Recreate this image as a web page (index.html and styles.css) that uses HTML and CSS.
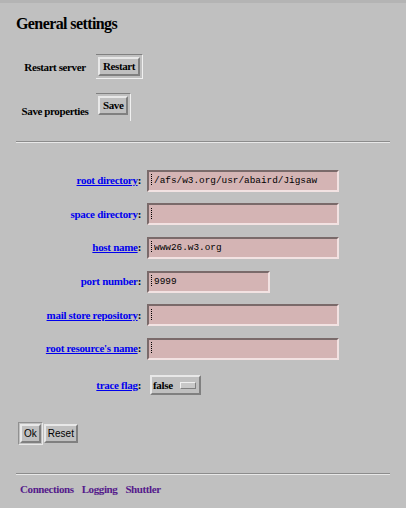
FILE: index.html
```html
<!DOCTYPE html>
<html>
<head>
<meta charset="utf-8">
<title>General settings</title>
<link rel="stylesheet" href="styles.css">
</head>
<body>
<div class="page">
  <h1 class="title">General settings</h1>
  <div class="actions">
    <div class="act-row restart">
      <span class="act-label">Restart server</span>
      <span class="well"><button class="btn-serif" type="button">Restart</button></span>
    </div>
    <div class="act-row save">
      <span class="act-label">Save properties</span>
      <span class="well"><button class="btn-serif" type="button">Save</button></span>
    </div>
  </div>
  <hr class="rule">
  <form class="props">
    <label class="lbl"><a href="#">root directory</a>:</label>
    <span class="field wide"><input class="inp" value="/afs/w3.org/usr/abaird/Jigsaw"></span>

    <label class="lbl"><span class="plain">space directory</span>:</label>
    <span class="field wide"><input class="inp" value=""></span>

    <label class="lbl"><a href="#">host name</a>:</label>
    <span class="field wide"><input class="inp" value="www26.w3.org"></span>

    <label class="lbl"><span class="plain">port number</span>:</label>
    <span class="field short"><input class="inp" value="9999"></span>

    <label class="lbl"><a href="#">mail store repository</a>:</label>
    <span class="field wide"><input class="inp" value=""></span>

    <label class="lbl"><a href="#">root resource's name</a>:</label>
    <span class="field wide"><input class="inp" value=""></span>

    <label class="lbl flag-lbl"><a href="#">trace flag</a>:</label>
    <span class="flag-cell"><button class="option" type="button">false <span class="opt-ind"></span></button></span>
  </form>
  <div class="form-btns">
    <span class="def-ring"><button class="btn-sans" type="button">Ok</button></span>
    <button class="btn-sans" type="button">Reset</button>
  </div>
  <hr class="rule bottom-rule">
  <nav class="footer">
    <a href="#">Connections</a>
    <a href="#">Logging</a>
    <a href="#">Shuttler</a>
  </nav>
</div>
</body>
</html>
```

FILE: styles.css
```css
html, body {
  margin: 0;
  padding: 0;
  background: #c0c0c0;
}
body {
  font-family: "Liberation Serif", "Times New Roman", serif;
  color: #000;
}
.page {
  border-top: 3px solid #b4b4b4;
  padding: 0 16px 0 16px;
  height: 505px;
}
.title {
  margin: 12px 0 0 0;
  font-size: 16px;
  line-height: 18px;
  font-weight: bold;
  letter-spacing: -0.6px;
}
.actions {
  display: flex;
  flex-direction: column;
}
.act-row {
  display: flex;
}
.act-label {
  width: 78px;
  text-align: center;
  font-size: 11px;
  font-weight: bold;
  letter-spacing: -0.4px;
  white-space: nowrap;
}
.restart {
  margin-top: 21px;
  align-items: center;
}
.save {
  margin-top: 14px;
  align-items: flex-start;
}
.save .act-label {
  margin-top: 12px;
}
.well {
  display: inline-flex;
  border-top: 1px solid #808080;
  border-right: 1px solid #f0f0f0;
  border-bottom: 1px solid #f0f0f0;
  padding: 2px;
}
.restart .well {
  margin-left: 2px;
}
.save .well {
  margin-left: 2px;
  border-bottom: 0;
  padding-bottom: 6px;
}
.btn-serif {
  font-family: "Liberation Serif", "Times New Roman", serif;
  font-weight: bold;
  font-size: 11px;
  letter-spacing: -0.4px;
  background: #c0c0c0;
  color: #000;
  border: 2px solid;
  border-color: #e8e8e8 #808080 #808080 #e8e8e8;
  padding: 1px 3px;
  line-height: 13px;
  margin: 0;
}
.rule {
  border: 0;
  border-top: 1px solid #8c8c8c;
  border-bottom: 1px solid #e8e8e8;
  height: 0;
  margin: 0;
}
.actions + .rule {
  margin-top: 20px;
}
.props {
  margin-top: 26px;
  display: grid;
  grid-template-columns: 125px auto;
  column-gap: 6px;
  grid-auto-rows: 22px;
  row-gap: 11.7px;
  align-items: center;
}
.lbl {
  text-align: right;
  font-size: 11px;
  font-weight: bold;
  letter-spacing: -0.3px;
  white-space: nowrap;
}
.lbl a, .lbl .plain {
  color: #0000ee;
}
.field {
  position: relative;
  display: block;
  height: 22px;
}
.field.wide { width: 192px; }
.field.short { width: 123px; }
.inp {
  box-sizing: border-box;
  width: 100%;
  height: 22px;
  margin: 0;
  background: #d4b4b4;
  border: 2px solid;
  border-color: #7a6a6a #f2e2e2 #f2e2e2 #7a6a6a;
  padding: 0 0 0 5px;
  font-family: "Liberation Mono", "DejaVu Sans Mono", monospace;
  font-size: 9.4px;
  color: #000;
  outline: none;
}
.field::before {
  content: "";
  position: absolute;
  left: 4px;
  top: 5px;
  width: 0;
  height: 11px;
  border-left: 1px dotted #000;
}
.flag-lbl {
  margin-top: 5px;
}
.flag-cell {
  display: block;
  margin-top: 6px;
  padding-left: 3px;
}
.option {
  font-family: "Liberation Serif", "Times New Roman", serif;
  font-weight: bold;
  font-size: 11px;
  letter-spacing: -0.3px;
  background: #c0c0c0;
  border: 2px solid;
  border-color: #e8e8e8 #808080 #808080 #e8e8e8;
  height: 20px;
  width: 51px;
  padding: 0 0 0 1px;
  margin: 0;
  display: inline-flex;
  align-items: center;
  gap: 7px;
  color: #000;
}
.opt-ind {
  display: inline-block;
  width: 14px;
  height: 5px;
  background: #c8c8c8;
  border: 1px solid;
  border-color: #f0f0f0 #808080 #808080 #f0f0f0;
}
.form-btns {
  margin-top: 29px;
  padding-left: 2px;
  display: flex;
  align-items: center;
  gap: 1px;
}
.def-ring {
  display: inline-flex;
  border: 1px solid;
  border-color: #909090 #e8e8e8 #e8e8e8 #909090;
  padding: 1px;
}
.btn-sans {
  font-family: "Liberation Sans", Arial, sans-serif;
  font-size: 10px;
  background: #c0c0c0;
  color: #000;
  border: 2px solid;
  border-color: #e8e8e8 #808080 #808080 #e8e8e8;
  height: 19px;
  padding: 0 2px;
  margin: 0;
}
.bottom-rule {
  margin-top: 28px;
}
.footer {
  margin-top: 8px;
  padding-left: 4px;
  display: flex;
  gap: 8px;
}
.footer a {
  color: #551a8b;
  text-decoration: none;
  font-size: 11px;
  font-weight: bold;
  letter-spacing: -0.4px;
}
```
